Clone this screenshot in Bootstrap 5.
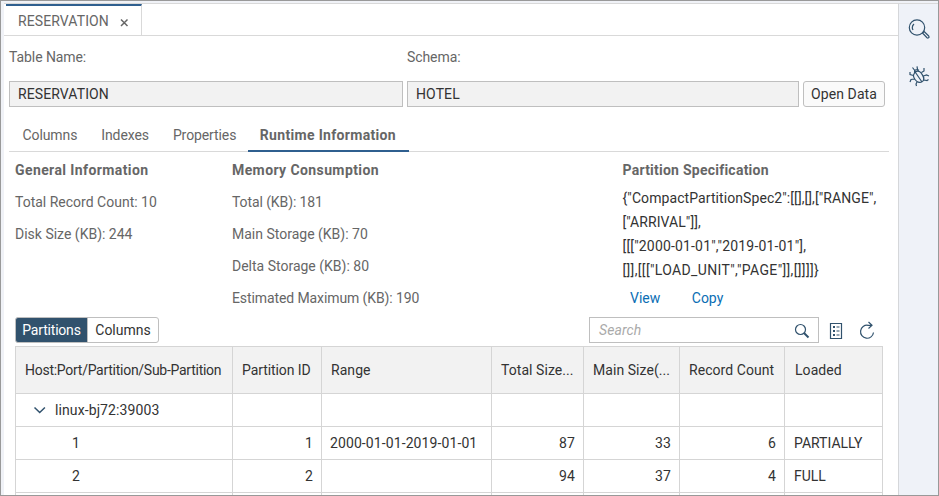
<!DOCTYPE html>
<html lang="en">
<head>
<meta charset="utf-8">
<meta name="viewport" content="width=device-width, initial-scale=1">
<title>RESERVATION</title>
<link href="https://cdn.jsdelivr.net/npm/bootstrap@5.3.0/dist/css/bootstrap.min.css" rel="stylesheet">
<style>
body{font:14px/20px Roboto,"Liberation Sans",sans-serif;color:#666;letter-spacing:.1px}
.frame{height:496px;border:1px solid #999;background:#f0f2f7;padding:2px 0 0 3px}
.editor{border-top:1px solid #d9d9d9;background:#fff;width:894px}
.rail{border-left:1px solid #d5d7da;border-top:1px solid #d9d9d9;background:#eff2f8;padding-top:14px;gap:22px}
.doc-tabs{height:32px;border-bottom:1px solid #d9d9d9;padding-left:2px}
.doc-tab{width:136px;height:31px;border-top:2px solid #2f5f8f;border-right:1px solid #d9d9d9;padding:5px 12px 0 12px}
.field{height:26px;border:1px solid #bfbfbf;background:#f2f2f2;color:#333;padding:2px 8px}
.labels{padding:11px 0 0 5px;height:45px;letter-spacing:-.08px}
.fields{padding-left:5px;gap:4px}
.w-name{width:394px}.w-schema{width:392px}
.btn-tool{--bs-btn-padding-x:7px;--bs-btn-padding-y:2px;--bs-btn-font-size:14px;--bs-btn-line-height:20px;--bs-btn-color:#333;--bs-btn-border-color:#bfbfbf;--bs-btn-bg:#fafafa;--bs-btn-border-radius:3px;height:26px;white-space:nowrap;letter-spacing:.1px}
.t-open{width:82px}
.page-tabs{margin:18px 0 0 5px;width:880px;height:27px;border-bottom:1px solid #d9d9d9;padding-left:13.500px;gap:24px;letter-spacing:-.1px}
.page-tabs .nav-link{padding:0;height:27px;color:#666}
.page-tabs .nav-link.active{font-weight:700;color:#666;border-bottom:2px solid #2f5f8f;padding:0 12px;margin-left:-12.500px;width:161px;letter-spacing:.32px;white-space:nowrap}
.info{padding-left:11px;height:165px;letter-spacing:0}
.info-title{font-weight:700;margin-top:8px;height:26px;letter-spacing:.4px}
.g3 .info-title{letter-spacing:.24px}
.info-line{height:32px;padding-top:6px}
.t-tight{letter-spacing:-.1px}
.g1{width:217px}.g2{width:390.500px}.g3{width:270px}
.spec{line-height:24px;color:#333;white-space:nowrap;letter-spacing:.08px}
.spec .t-dates{letter-spacing:.17px}
.spec .t-unit{letter-spacing:.35px}
.links{padding:6px 0 0 7.500px;gap:31.500px}
.links a{color:#0a6eb4;text-decoration:none}
.tools{padding-left:11px;height:29px}
.seg .btn-tool{border-color:#bfbfbf;--bs-btn-bg:#fff;--bs-btn-padding-x:6px;width:72px;letter-spacing:0}
.seg .btn-tool.active{--bs-btn-active-bg:#31526d;--bs-btn-active-border-color:#31526d;--bs-btn-active-color:#fff;width:73px;letter-spacing:-.2px}
.search{width:230px;height:26px;border:1px solid #bfbfbf;padding:2px 8px 2px 9px;color:#aaa;font-style:italic}
.refresh{margin-right:19px}
.grid-table{table-layout:fixed;width:868px;margin:0 0 0 11px;border-collapse:collapse;color:#333}
.grid-table th,.grid-table td{border:1px solid #d5d5d5;padding:0 8px;height:33px;font-weight:400;white-space:nowrap;overflow:hidden}
.grid-table th{background:#f2f2f2;height:47px;padding:0 9px;letter-spacing:.06px}
.grid-table td:last-child{padding-left:9px;letter-spacing:0}
.grid-table th:last-child{padding-left:10px}
.grid-table .t-host{letter-spacing:-.27px}
.grid-table .t-id{letter-spacing:-.08px}
.grid-table .lvl{padding-left:56px}
.host-row{padding-left:8px;gap:9px}
svg{display:block;fill:none;stroke:#31526d;stroke-width:1.2}
</style>
</head>
<body class="overflow-hidden">
<div class="frame d-flex overflow-hidden">
  <main class="editor flex-shrink-0 overflow-hidden">
    <div class="doc-tabs d-flex">
      <div class="doc-tab d-flex"><span>RESERVATION</span>
        <svg class="ms-auto" width="9" height="20" viewBox="0 0 9 20" style="stroke:#666;stroke-width:1.5"><path d="M1 8.500l6.500 6.500M7.500 8.500L1 15"/></svg></div>
    </div>
    <div class="labels d-flex"><span class="w-name me-1">Table Name:</span><span>Schema:</span></div>
    <div class="fields d-flex">
      <div class="field w-name">RESERVATION</div>
      <div class="field w-schema">HOTEL</div>
      <button class="btn btn-tool t-open" type="button">Open Data</button>
    </div>
    <nav class="page-tabs nav flex-nowrap">
      <a class="nav-link" href="#">Columns</a><a class="nav-link" href="#">Indexes</a><a class="nav-link" href="#">Properties</a><a class="nav-link active" href="#">Runtime Information</a>
    </nav>
    <section class="info d-flex">
      <div class="g1"><div class="info-title">General Information</div><div class="info-line">Total Record Count: 10</div><div class="info-line">Disk Size (KB): 244</div></div>
      <div class="g2"><div class="info-title">Memory Consumption</div><div class="info-line t-tight">Total (KB): 181</div><div class="info-line">Main Storage (KB): 70</div><div class="info-line">Delta Storage (KB): 80</div><div class="info-line t-tight">Estimated Maximum (KB): 190</div></div>
      <div class="g3"><div class="info-title">Partition Specification</div>
        <div class="spec"><div>{"CompactPartitionSpec2":[[],[],["RANGE",</div><div>["ARRIVAL"]],</div><div class="t-dates">[[["2000-01-01","2019-01-01"],</div><div class="t-unit">[]],[[["LOAD_UNIT","PAGE"]],[]]]]}</div></div>
        <div class="links d-flex"><a href="#">View</a><a href="#">Copy</a></div></div>
    </section>
    <div class="tools d-flex">
      <div class="seg btn-group"><button class="btn btn-tool active" type="button">Partitions</button><button class="btn btn-tool" type="button">Columns</button></div>
      <div class="search ms-auto d-flex justify-content-between"><span>Search</span>
        <svg width="16" height="20" viewBox="0 0 16 20"><circle cx="6.500" cy="9.500" r="5"/><path d="M10 13l4.500 4.500" stroke-width="2"/></svg></div>
      <svg class="ms-2" width="20" height="26" viewBox="0 0 20 26"><path d="M3.500 6.500h11v15h-11z"/><path d="M6 10h2M6 14h2M6 18h2" style="stroke-width:2"/><path d="M9.500 10h3M9.500 14h3M9.500 18h3"/></svg>
      <svg class="ms-2 refresh" width="24" height="26" viewBox="0 0 24 26"><path d="M18.500 15.500a6.500 6.500 0 1 1-5.500-7.200h4M13.500 5l3.500 3.300-3.500 3.200"/></svg>
    </div>
    <table class="grid-table">
      <colgroup><col width="217"><col width="89"><col width="170"><col width="92"><col width="96"><col width="105"><col width="98"></colgroup>
      <thead><tr><th class="t-host">Host:Port/Partition/Sub-Partition</th><th class="t-id">Partition ID</th><th>Range</th><th>Total Size...</th><th>Main Size(...</th><th>Record Count</th><th>Loaded</th></tr></thead>
      <tbody>
        <tr><td><div class="host-row d-flex align-items-center"><svg width="14" height="12" viewBox="0 0 14 12" style="stroke-width:1.500"><path d="M2.500 3.500l5.200 5 5.200-5"/></svg><span>linux-bj72:39003</span></div></td><td></td><td></td><td></td><td></td><td></td><td></td></tr>
        <tr><td class="lvl">1</td><td class="text-end">1</td><td>2000-01-01-2019-01-01</td><td class="text-end">87</td><td class="text-end">33</td><td class="text-end">6</td><td>PARTIALLY</td></tr>
        <tr><td class="lvl">2</td><td class="text-end">2</td><td></td><td class="text-end">94</td><td class="text-end">37</td><td class="text-end">4</td><td>FULL</td></tr>
        <tr><td></td><td></td><td></td><td></td><td></td><td></td><td></td></tr>
      </tbody>
    </table>
  </main>
  <aside class="rail flex-fill d-flex flex-column align-items-center">
    <svg width="22" height="24" viewBox="0 0 22 24"><circle cx="9" cy="9.500" r="7.700"/><path d="M5 12a5 5 0 0 1 1-6M14.500 15l1.700-1.500 4.500 4.500c1 1.300-.6 2.600-1.700 1.700z"/></svg>
    <svg width="22" height="24" viewBox="0 0 22 24"><path d="M6.500 9c1.500-2.500 5-2.500 7 .5s3.500 5 1.500 7.500-6 1.500-8-1.500-2-4-.5-6.500zM7.500 8.500l6.500 9.500M6.500 8.500c-.5-2.500 2.500-4 4.500-2M6.800 6.500L4.500 3.500M9.500 5.300l-.5-3M5.500 11.500L2 10.500V8M6.500 15l-3.500.5-1 2.500M9 18l-1 2 .5 2M13.500 8.500L16 7V4M15.500 12l3-1 2.500 1M16 16l3 .5 1.500-1"/></svg>
  </aside>
</div>
</body>
</html>
